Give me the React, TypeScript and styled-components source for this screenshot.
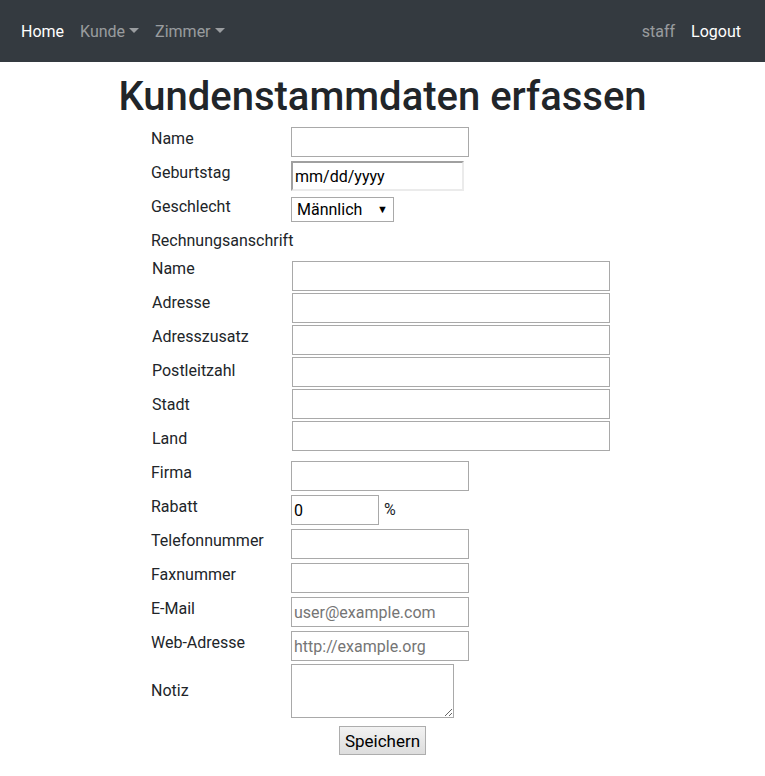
import React from "react";
import styled, { createGlobalStyle, css } from "styled-components";

const FONT = `Roboto, "Noto Sans", sans-serif`;

const Global = createGlobalStyle`
  html, body { margin: 0; padding: 0; background: #fff; }
  body { font-family: ${FONT}; font-size: 16px; line-height: 1.5; color: #212529; }
  * { box-sizing: border-box; }
`;

const Navbar = styled.nav`
  height: 62px;
  background: #343a40;
  display: flex;
  align-items: center;
  justify-content: space-between;
  padding: 2px 16px 0 13px;
`;

const NavGroup = styled.div`
  display: flex;
  align-items: center;
`;

const NavLink = styled.a<{ $active?: boolean; $caret?: boolean }>`
  padding: 8px;
  color: ${(p) => (p.$active ? "#fff" : "rgba(255,255,255,.5)")};
  text-decoration: none;
  font-size: 16px;
  line-height: 24px;
  cursor: pointer;
  ${(p) =>
    p.$caret &&
    css`
      &::after {
        content: "";
        display: inline-block;
        margin-left: 4px;
        vertical-align: 4px;
        border-top: 5px solid;
        border-left: 5px solid transparent;
        border-right: 5px solid transparent;
      }
    `}
`;

const Title = styled.h1`
  margin: 11px 0 5px;
  text-align: center;
  font-size: 40px;
  line-height: 48px;
  font-weight: 500;
  color: #212529;
`;

const Form = styled.form`
  width: 463px;
  margin: 0 auto;
  display: flex;
  flex-direction: column;
`;

const Row = styled.div<{ $h: number; $center?: boolean }>`
  display: grid;
  grid-template-columns: 140px 1fr;
  height: ${(p) => p.$h}px;
  align-items: ${(p) => (p.$center ? "center" : "start")};
`;

const Label = styled.label<{ $shift?: number }>`
  display: block;
  font-size: 16px;
  line-height: 24px;
  margin-top: ${(p) => p.$shift ?? 1}px;
  white-space: nowrap;
`;

const Field = styled.div<{ $top?: number }>`
  display: flex;
  align-items: center;
  margin-top: ${(p) => p.$top ?? 0}px;
`;

const Nested = styled.div`
  display: grid;
  grid-template-columns: 140px 1fr;
  padding-left: 1px;
  height: 200px;
`;

const NestedLabels = styled.div`
  display: flex;
  flex-direction: column;
  gap: 10px;
  margin-top: -3px;
`;

const NestedInputs = styled.div`
  display: flex;
  flex-direction: column;
  gap: 2px;
  padding-top: 1px;
`;

const TextInput = styled.input<{ $w: number }>`
  width: ${(p) => p.$w}px;
  height: 30px;
  border: 1px solid #a9a9a9;
  padding: 0 2px;
  font-family: ${FONT};
  font-size: 16px;
  color: #000;
  background: #fff;
  outline: none;
  &::placeholder { color: #757575; }
`;

const DateInput = styled.input`
  width: 173px;
  height: 30px;
  border: 2px solid #ebebeb;
  border-top-color: #a0a0a0;
  border-left-color: #a0a0a0;
  padding: 0 2px;
  font-family: ${FONT};
  font-size: 16px;
  color: #000;
  outline: none;
  &::placeholder { color: #000; }
`;

const SelectWrap = styled.span`
  position: relative;
  display: inline-block;
`;

const Select = styled.select`
  appearance: none;
  -webkit-appearance: none;
  width: 103px;
  height: 25px;
  border: 1px solid #a9a9a9;
  border-radius: 0;
  background: #fff;
  padding: 0 0 0 5px;
  font-family: ${FONT};
  font-size: 16px;
  color: #000;
  outline: none;
`;

const SelectArrow = styled.span`
  position: absolute;
  right: 6px;
  top: 50%;
  transform: translateY(-55%);
  font-size: 11px;
  line-height: 1;
  color: #000;
  pointer-events: none;
`;

const Unit = styled.span`
  margin-left: 5px;
  font-size: 16px;
`;

const TextArea = styled.textarea`
  width: 163px;
  height: 54px;
  border: 1px solid #a9a9a9;
  font-family: ${FONT};
  font-size: 14px;
  display: block;
  outline: none;
`;

const SaveButton = styled.button`
  align-self: center;
  margin-top: 8px;
  width: 87px;
  height: 29px;
  border: 1px solid #adadad;
  border-radius: 0;
  background: linear-gradient(#f2f2f2, #dddddd);
  font-family: ${FONT};
  font-size: 17px;
  color: #000;
  padding: 0;
`;

const billing = ["Name", "Adresse", "Adresszusatz", "Postleitzahl", "Stadt", "Land"];

type MainField = { label: string; placeholder?: string };
const contact: MainField[] = [
  { label: "Telefonnummer" },
  { label: "Faxnummer" },
  { label: "E-Mail", placeholder: "user@example.com" },
  { label: "Web-Adresse", placeholder: "http://example.org" },
];

export default function App() {
  return (
    <>
      <Global />
      <Navbar>
        <NavGroup>
          <NavLink $active>Home</NavLink>
          <NavLink $caret>Kunde</NavLink>
          <NavLink $caret>Zimmer</NavLink>
        </NavGroup>
        <NavGroup>
          <NavLink>staff</NavLink>
          <NavLink $active>Logout</NavLink>
        </NavGroup>
      </Navbar>
      <Title>Kundenstammdaten erfassen</Title>
      <Form onSubmit={(e) => e.preventDefault()}>
        <Row $h={34}>
          <Label>Name</Label>
          <Field $top={1}>
            <TextInput $w={178} />
          </Field>
        </Row>
        <Row $h={34}>
          <Label>Geburtstag</Label>
          <Field $top={1}>
            <DateInput placeholder="mm/dd/yyyy" />
          </Field>
        </Row>
        <Row $h={34}>
          <Label>Geschlecht</Label>
          <Field $top={3}>
            <SelectWrap>
              <Select defaultValue="m">
                <option value="m">Männlich</option>
                <option value="w">Weiblich</option>
              </Select>
              <SelectArrow>▼</SelectArrow>
            </SelectWrap>
          </Field>
        </Row>
        <Row $h={32}>
          <Label>Rechnungsanschrift</Label>
        </Row>
        <Nested>
          <NestedLabels>
            {billing.map((l) => (
              <Label key={l} $shift={0}>
                {l}
              </Label>
            ))}
          </NestedLabels>
          <NestedInputs>
            {billing.map((l) => (
              <TextInput key={l} $w={318} aria-label={l} />
            ))}
          </NestedInputs>
        </Nested>
        <Row $h={34}>
          <Label>Firma</Label>
          <Field $top={1}>
            <TextInput $w={178} />
          </Field>
        </Row>
        <Row $h={34}>
          <Label>Rabatt</Label>
          <Field $top={1}>
            <TextInput $w={88} defaultValue="0" />
            <Unit>%</Unit>
          </Field>
        </Row>
        {contact.map((f) => (
          <Row key={f.label} $h={34}>
            <Label>{f.label}</Label>
            <Field $top={1}>
              <TextInput $w={178} placeholder={f.placeholder} />
            </Field>
          </Row>
        ))}
        <Row $h={54} $center>
          <Label $shift={-1}>Notiz</Label>
          <Field>
            <TextArea />
          </Field>
        </Row>
        <SaveButton type="submit">Speichern</SaveButton>
      </Form>
    </>
  );
}
